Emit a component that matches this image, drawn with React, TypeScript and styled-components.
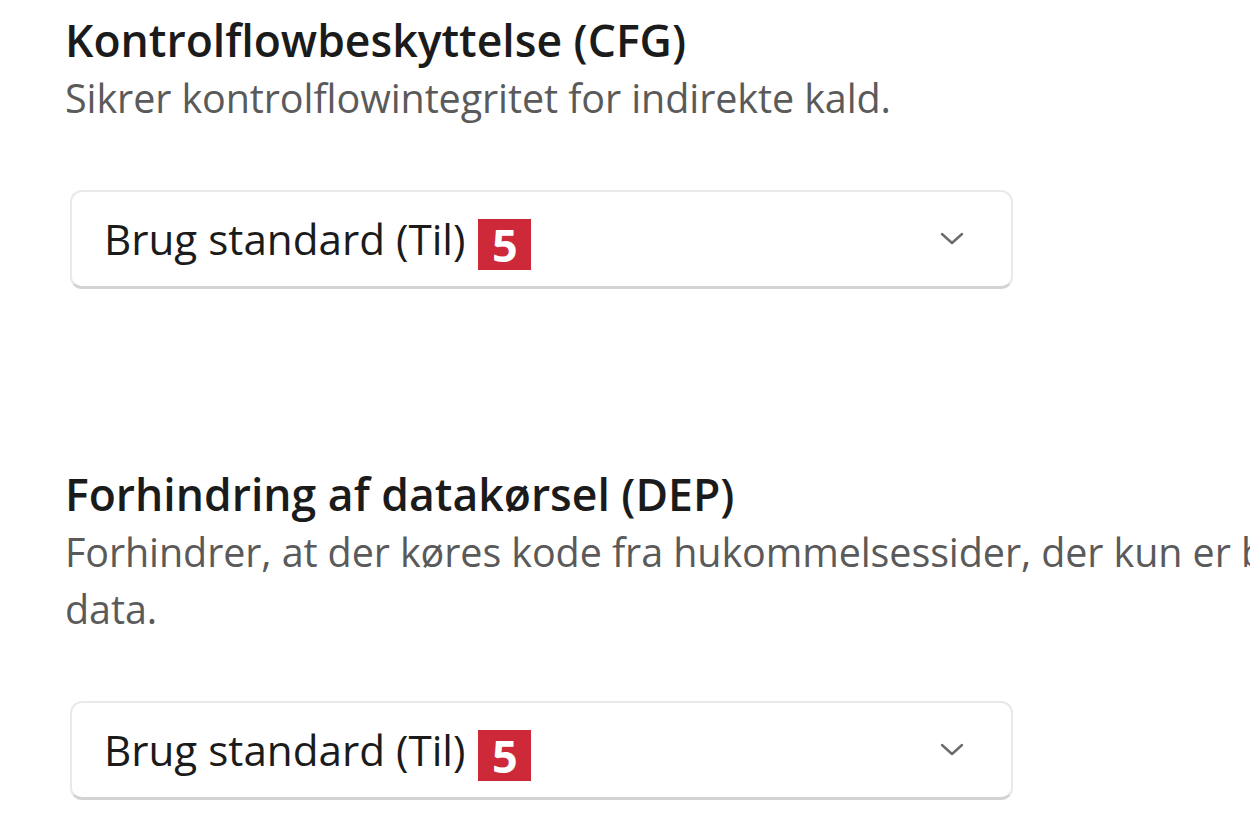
import React from "react";
import styled, { createGlobalStyle } from "styled-components";

const GlobalStyle = createGlobalStyle`
  html, body {
    margin: 0;
    padding: 0;
    background: #ffffff;
    overflow: hidden;
  }
  body {
    font-family: "Open Sans", "Noto Sans", "DejaVu Sans", sans-serif;
  }
`;

const Page = styled.div`
  display: flex;
  flex-direction: column;
  padding: 10px 0 0 65px;
  width: 1250px;
  box-sizing: border-box;
`;

const Section = styled.section`
  display: flex;
  flex-direction: column;
  & + & {
    margin-top: 175px;
  }
`;

const Title = styled.div`
  font-weight: 600;
  font-size: 44.5px;
  line-height: 60px;
  color: #1b1b1b;
  white-space: nowrap;
`;

const Description = styled.div`
  font-weight: 400;
  font-size: 39.5px;
  line-height: 57px;
  letter-spacing: -0.1px;
  color: #5a5a5a;
  width: 1420px;
`;

const Select = styled.div`
  margin-top: 63px;
  margin-left: 5px;
  width: 943px;
  height: 99px;
  box-sizing: border-box;
  display: flex;
  align-items: center;
  padding: 0 47px 0 32px;
  background: #ffffff;
  border: 2px solid #e9e9e9;
  border-bottom: 3px solid #d3d3d3;
  border-radius: 12px;
`;

const Value = styled.span`
  font-size: 42.2px;
  line-height: 56px;
  color: #1b1b1b;
  white-space: nowrap;
`;

const Badge = styled.span`
  display: inline-flex;
  align-items: center;
  justify-content: center;
  margin-left: 13px;
  margin-top: 10px;
  width: 53px;
  height: 51px;
  background: #cd2938;
  color: #ffffff;
  font-weight: 700;
  font-size: 45px;
  line-height: 1;
`;

const Chevron = styled.svg`
  margin-left: auto;
  width: 24px;
  height: 14px;
  flex: none;
`;

const ChevronIcon = () => (
  <Chevron viewBox="0 0 24 14" aria-hidden="true">
    <polyline
      points="2,2 12,11 22,2"
      fill="none"
      stroke="#6b6b6b"
      strokeWidth="2.4"
      strokeLinecap="round"
      strokeLinejoin="round"
    />
  </Chevron>
);

type SettingProps = {
  title: string;
  description: string;
  value: string;
  badge: string;
};

const Setting = ({ title, description, value, badge }: SettingProps) => (
  <Section>
    <Title>{title}</Title>
    <Description>{description}</Description>
    <Select>
      <Value>{value}</Value>
      <Badge>{badge}</Badge>
      <ChevronIcon />
    </Select>
  </Section>
);

export default function App() {
  return (
    <>
      <GlobalStyle />
      <Page>
        <Setting
          title="Kontrolflowbeskyttelse (CFG)"
          description="Sikrer kontrolflowintegritet for indirekte kald."
          value="Brug standard (Til)"
          badge="5"
        />
        <Setting
          title="Forhindring af datakørsel (DEP)"
          description="Forhindrer, at der køres kode fra hukommelsessider, der kun er beregnet til data."
          value="Brug standard (Til)"
          badge="5"
        />
      </Page>
    </>
  );
}
